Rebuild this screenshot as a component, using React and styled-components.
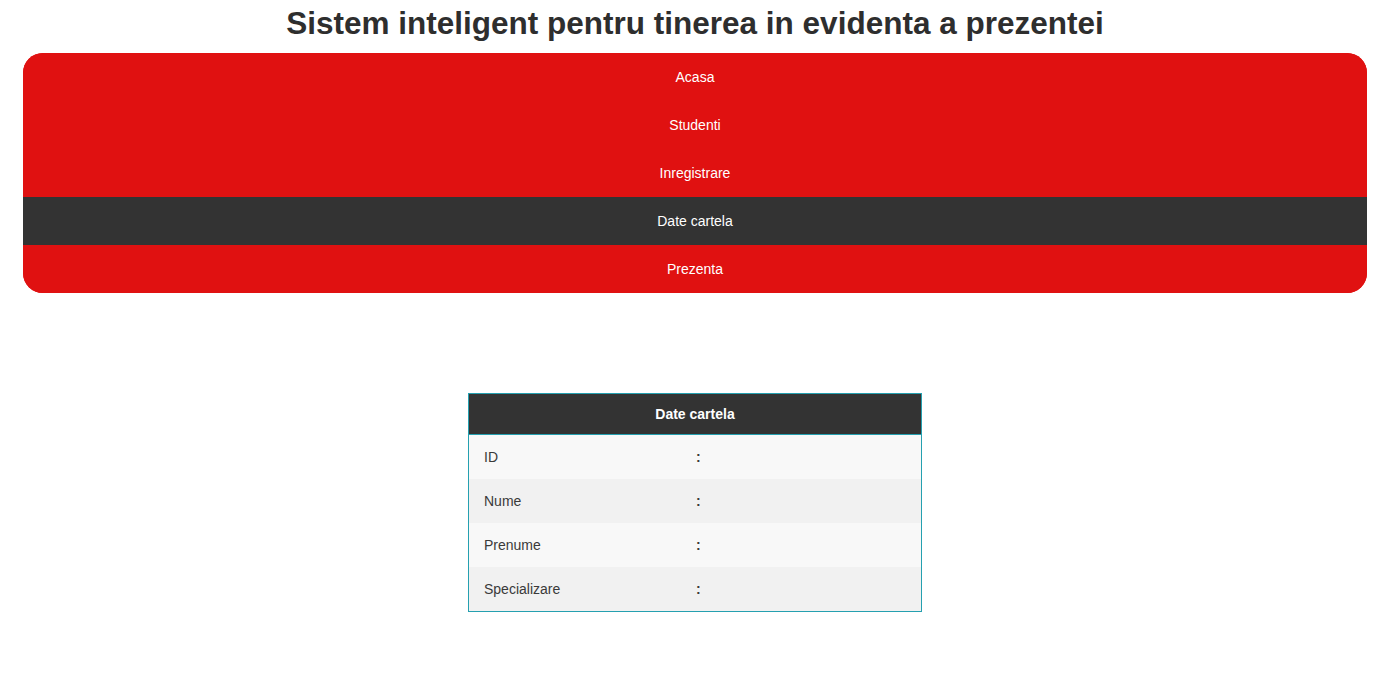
import React from "react";
import styled, { createGlobalStyle } from "styled-components";

const Global = createGlobalStyle`
  html, body { margin: 0; padding: 0; background: #ffffff; }
  body { font-family: "Liberation Sans", Arial, sans-serif; color: #333; }
`;

const Page = styled.div`
  margin: 0 32px 0 23px;
  display: flex;
  flex-direction: column;
  align-items: stretch;
`;

const Title = styled.h1`
  margin: 5px 0 11px;
  font-size: 31.5px;
  font-weight: bold;
  color: #2e2e2e;
  text-align: center;
  line-height: 37px;
`;

const Nav = styled.nav`
  display: flex;
  flex-direction: column;
  border-radius: 20px;
  overflow: hidden;
  background: #e01111;
`;

const NavItem = styled.a`
  display: flex;
  align-items: center;
  justify-content: center;
  height: 48px;
  font-size: 14px;
  color: #ffffff;
  text-decoration: none;
  background: ${(p) => (p.$active ? "#333333" : "#e01111")};
`;

const CardWrap = styled.div`
  display: flex;
  justify-content: center;
  margin-top: 100px;
`;

const Card = styled.div`
  width: 452px;
  border: 1px solid #25a0b0;
  display: flex;
  flex-direction: column;
`;

const CardHead = styled.div`
  height: 40px;
  display: flex;
  align-items: center;
  justify-content: center;
  background: #333333;
  color: #ffffff;
  font-size: 14px;
  font-weight: bold;
  border-bottom: 1px solid #25a0b0;
`;

const Row = styled.div`
  display: grid;
  grid-template-columns: 212px 1fr;
  height: 44px;
  align-items: center;
  background: ${(p) => (p.$alt ? "#f1f1f1" : "#f8f8f8")};
  font-size: 14px;
  color: #3a3a3a;
`;

const Cell = styled.div`
  padding-left: 15px;
  font-weight: ${(p) => (p.$bold ? "bold" : "normal")};
`;

const items = ["Acasa", "Studenti", "Inregistrare", "Date cartela", "Prezenta"];
const rows = ["ID", "Nume", "Prenume", "Specializare"];

export default function App() {
  return (
    <>
      <Global />
      <Page>
        <Title>Sistem inteligent pentru tinerea in evidenta a prezentei</Title>
        <Nav>
          {items.map((it) => (
            <NavItem key={it} href="#" $active={it === "Date cartela"}>
              {it}
            </NavItem>
          ))}
        </Nav>
        <CardWrap>
          <Card>
            <CardHead>Date cartela</CardHead>
            {rows.map((r, i) => (
              <Row key={r} $alt={i % 2 === 1}>
                <Cell>{r}</Cell>
                <Cell $bold>:</Cell>
              </Row>
            ))}
          </Card>
        </CardWrap>
      </Page>
    </>
  );
}
